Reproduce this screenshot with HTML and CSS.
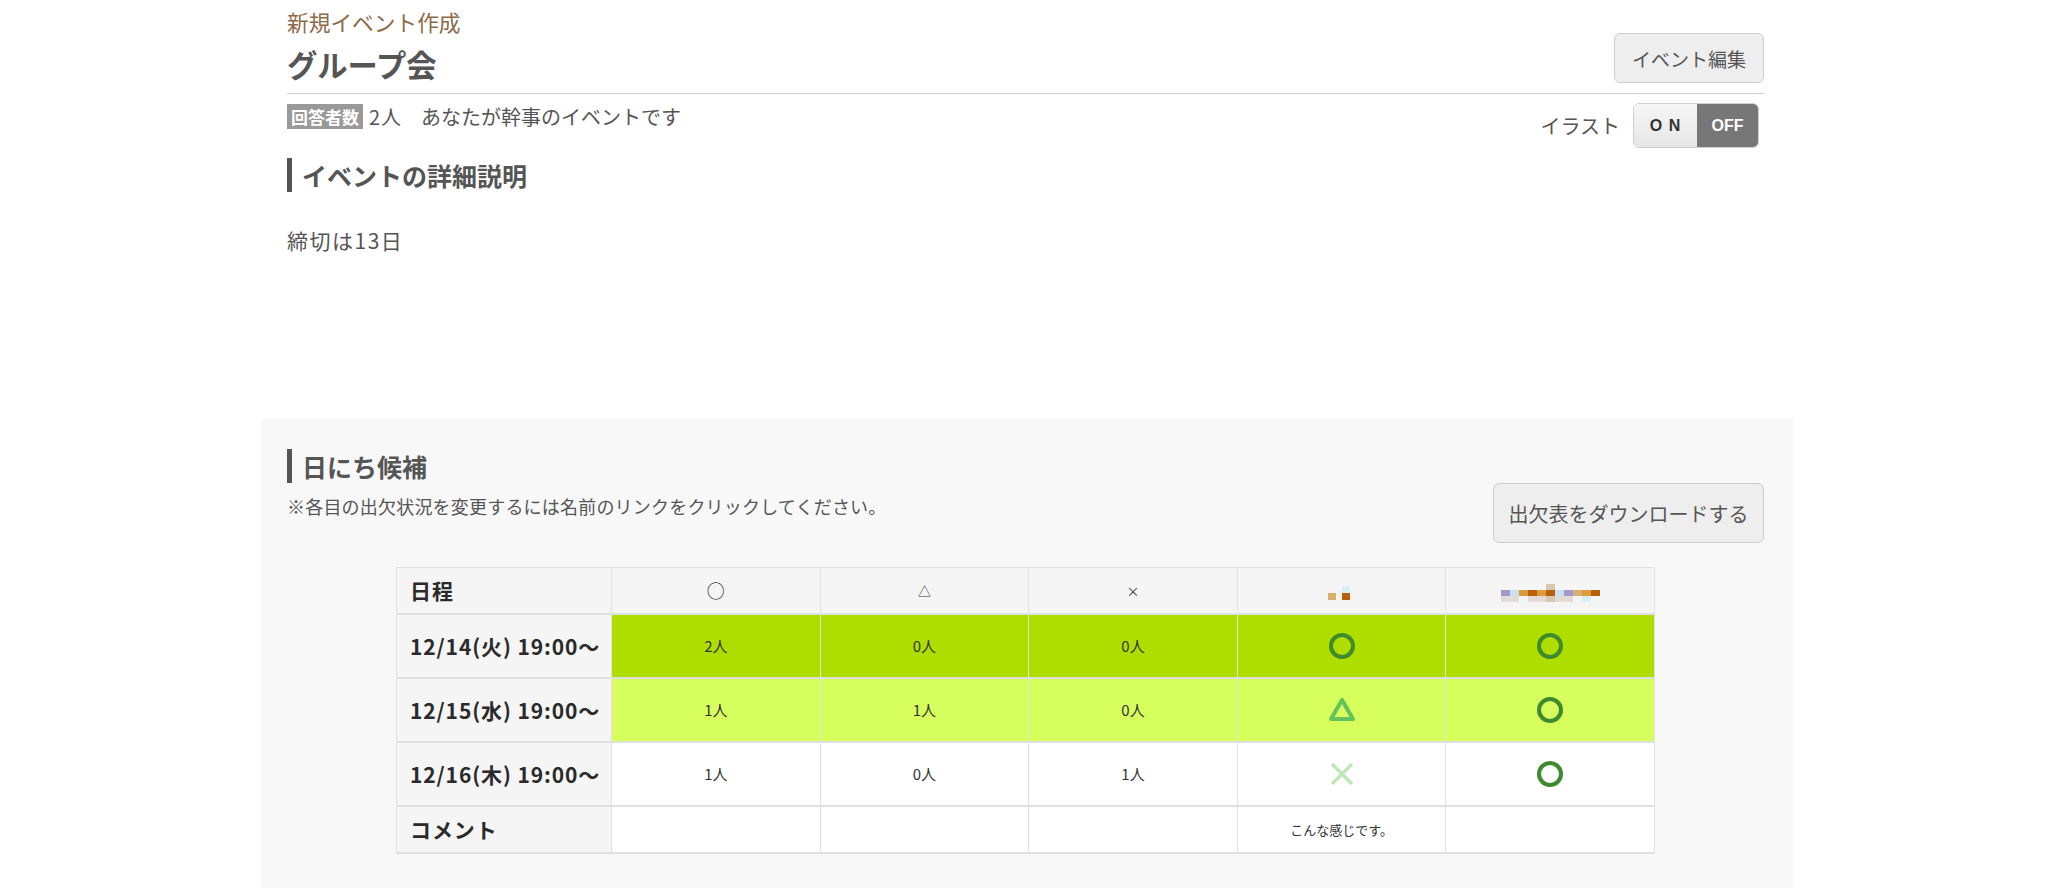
FILE: index.html
```html
<!DOCTYPE html>
<html lang="ja">
<head>
<meta charset="utf-8">
<title>グループ会</title>
<link rel="stylesheet" href="styles.css">
</head>
<body>
<div class="page">
  <div class="top">
    <div class="header">
      <div class="titles">
        <div class="sub">新規イベント作成</div>
        <h1 class="title">グループ会</h1>
      </div>
      <button class="btn btn-edit">イベント編集</button>
    </div>
    <div class="info">
      <div class="count"><span class="badge">回答者数</span><span class="num">2人</span><span class="owner">あなたが幹事のイベントです</span></div>
      <div class="illust">
        <span class="illust-label">イラスト</span>
        <div class="toggle"><span class="on">O N</span><span class="off">OFF</span></div>
      </div>
    </div>
    <h2 class="heading">イベントの詳細説明</h2>
    <p class="desc">締切は13日</p>
  </div>

  <div class="schedule">
    <h2 class="heading">日にち候補</h2>
    <div class="toolbar">
      <p class="note">※各目の出欠状況を変更するには名前のリンクをクリックしてください。</p>
      <button class="btn btn-dl">出欠表をダウンロードする</button>
    </div>
    <table class="grid">
      <colgroup><col class="c-date"><col><col><col><col><col></colgroup>
      <thead>
        <tr>
          <th class="first">日程</th>
          <th class="sym sym-o">○</th>
          <th class="sym sym-s">△</th>
          <th class="sym sym-s">×</th>
          <th class="name">
            <span class="mosaic m1">
              <span class="mrow"><i class="b0"></i><i class="cy"></i></span>
              <span class="mrow"><i class="tn"></i><i class="br"></i></span>
            </span>
          </th>
          <th class="name">
            <span class="mosaic m2">
              <span class="mrow"><i class="b0"></i><i class="b0"></i><i class="b0"></i><i class="b0"></i><i class="b0"></i><i class="bg"></i><i class="b0"></i><i class="b0"></i><i class="b0"></i><i class="b0"></i><i class="b0"></i></span>
              <span class="mrow"><i class="pu"></i><i class="lb"></i><i class="or"></i><i class="br"></i><i class="or"></i><i class="br"></i><i class="lb"></i><i class="pu"></i><i class="tn"></i><i class="or"></i><i class="br"></i></span>
              <span class="mrow"><i class="gy"></i><i class="gy"></i><i class="b0"></i><i class="gy"></i><i class="gy"></i><i class="bg"></i><i class="gy"></i><i class="gy"></i><i class="b0"></i><i class="cy"></i><i class="b0"></i></span>
            </span>
          </th>
        </tr>
      </thead>
      <tbody>
        <tr class="best">
          <th class="first">12/14(火) 19:00～</th>
          <td>2人</td><td>0人</td><td>0人</td>
          <td><svg class="ic" width="30" height="30" viewBox="0 0 30 30"><circle cx="15" cy="15" r="11" fill="none" stroke="#3f8a2c" stroke-width="4"/></svg></td>
          <td><svg class="ic" width="30" height="30" viewBox="0 0 30 30"><circle cx="15" cy="15" r="11" fill="none" stroke="#3f8a2c" stroke-width="4"/></svg></td>
        </tr>
        <tr class="good">
          <th class="first">12/15(水) 19:00～</th>
          <td>1人</td><td>1人</td><td>0人</td>
          <td><svg class="ic" width="30" height="30" viewBox="0 0 30 30"><polygon points="15,5 26,24 4,24" fill="none" stroke="#63c35a" stroke-width="4" stroke-linejoin="round"/></svg></td>
          <td><svg class="ic" width="30" height="30" viewBox="0 0 30 30"><circle cx="15" cy="15" r="11" fill="none" stroke="#3f8a2c" stroke-width="4"/></svg></td>
        </tr>
        <tr>
          <th class="first">12/16(木) 19:00～</th>
          <td>1人</td><td>0人</td><td>1人</td>
          <td><svg class="ic" width="30" height="30" viewBox="0 0 30 30"><path d="M5 5 L25 25 M25 5 L5 25" fill="none" stroke="#bfe7b9" stroke-width="3.5"/></svg></td>
          <td><svg class="ic" width="30" height="30" viewBox="0 0 30 30"><circle cx="15" cy="15" r="11" fill="none" stroke="#3f8a2c" stroke-width="4"/></svg></td>
        </tr>
        <tr class="comment">
          <th class="first">コメント</th>
          <td></td><td></td><td></td>
          <td class="cmt">こんな感じです。</td>
          <td></td>
        </tr>
      </tbody>
    </table>
  </div>
</div>
</body>
</html>
```
FILE: styles.css
```css
* { box-sizing: border-box; }
html, body { margin: 0; padding: 0; background: #fff; }
body {
  font-family: "Noto Sans CJK JP", "Noto Sans", sans-serif;
  color: #555;
}
.page {
  width: 1532px;
  margin-left: 261px;
}
.top {
  padding: 0 29px 0 26px;
}
.header {
  display: flex;
  justify-content: space-between;
  align-items: flex-end;
  border-bottom: 1px solid #cfcfcf;
  padding-bottom: 7px;
}
.sub {
  font-size: 21.7px;
  line-height: 30px;
  margin-top: 7px;
  color: #8d6a47;
}
.title {
  margin: 5px 0 0;
  font-size: 30.3px;
  line-height: 44px;
  font-weight: 700;
  color: #555;
}
.btn {
  font-family: "Noto Sans CJK JP", "Noto Sans", sans-serif;
  color: #555;
  background: #eeeeee;
  border: 1px solid #cccccc;
  border-radius: 6px;
  cursor: pointer;
}
.btn-edit {
  width: 150px;
  height: 50px;
  font-size: 19px;
  margin-bottom: 3px;
  padding: 0;
}
.info {
  display: flex;
  justify-content: space-between;
  align-items: flex-start;
  padding-top: 9px;
}
.count {
  display: flex;
  align-items: center;
  height: 26px;
  font-size: 20px;
}
.badge {
  background: #999;
  color: #fff;
  font-size: 17px;
  line-height: 25px;
  height: 25px;
  padding: 0 4px;
  font-weight: 700;
}
.num { margin-left: 6px; letter-spacing: 1px; }
.owner { margin-left: 19px; }
.illust {
  display: flex;
  align-items: center;
  margin-right: 5px;
}
.illust-label {
  font-size: 20px;
  margin-right: 13px;
}
.toggle {
  display: flex;
  height: 45px;
  border: 1px solid #cfcfcf;
  border-radius: 6px;
  overflow: hidden;
  font-family: "Liberation Sans", Arial, sans-serif;
  font-weight: 700;
  font-size: 16px;
}
.toggle span {
  display: flex;
  align-items: center;
  justify-content: center;
}
.on {
  width: 63px;
  background: linear-gradient(#f6f6f6, #e6e6e6);
  color: #333;
  letter-spacing: 1px;
}
.off {
  width: 61px;
  background: #777;
  color: #fff;
}
.heading {
  margin: 10px 0 0;
  border-left: 5px solid #555;
  padding-left: 10px;
  font-size: 25px;
  line-height: 34px;
  font-weight: 700;
  color: #555;
}
.desc {
  margin: 33px 0 0;
  font-size: 21px;
  line-height: 30px;
  letter-spacing: 1.5px;
}
.schedule {
  margin-top: 163px;
  background: #f8f8f8;
  padding: 31px 29px 40px 26px;
}
.schedule .heading { margin-top: 0; }
.toolbar {
  display: flex;
  justify-content: space-between;
  align-items: flex-start;
}
.note {
  margin: 0;
  padding-top: 10px;
  font-size: 18px;
  line-height: 26px;
  letter-spacing: 0.2px;
  color: #555;
}
.btn-dl {
  width: 271px;
  height: 60px;
  font-size: 20px;
  padding: 0;
}
.grid {
  margin: 24px auto 0;
  width: 1259px;
  table-layout: fixed;
  border-collapse: collapse;
  background: #fff;
  border: 1px solid #e2e2e2;
}
.c-date { width: 215px; }
.grid th, .grid td {
  border-right: 1px solid #e2e2e2;
  border-bottom: 2px solid #e0e0e0;
  text-align: center;
  vertical-align: middle;
  padding: 0;
}
.grid thead th {
  height: 46px;
  background: #f5f5f5;
  font-weight: 400;
  color: #333;
}
.grid tbody tr { height: 64px; }
.grid tbody tr.comment { height: 47px; }
.grid .first {
  text-align: left;
  padding-left: 13px;
  background: #f5f5f5;
  font-size: 21px;
  font-weight: 700;
  letter-spacing: 0.9px;
  color: #2a2a2a;
}
.grid td {
  font-size: 15px;
  color: #333;
}
.grid tr.best td { background: #aede00; }
.grid tr.good td { background: #d6ff5e; }
.grid td.cmt { font-size: 13px; }
.sym-o { font-size: 18px; }
.sym-s { font-size: 13px; }
.ic { display: block; margin: 0 auto; }
.mosaic {
  display: inline-flex;
  flex-direction: column;
  vertical-align: middle;
}
.mrow { display: flex; }
.mosaic i {
  display: block;
  width: 9px;
  height: 6px;
}
.m1 i { width: 8px; height: 7px; margin-right: 6px; }
.b0 { background: transparent; }
.cy { background: #d8eff3; }
.tn { background: #d6b26e; }
.br { background: #b8600c; }
.lb { background: #c7e2ee; }
.bg { background: #d8c8b0; }
.pu { background: #a497cc; }
.or { background: #dc9a3a; }
.gy { background: #e3dcd6; }
```
